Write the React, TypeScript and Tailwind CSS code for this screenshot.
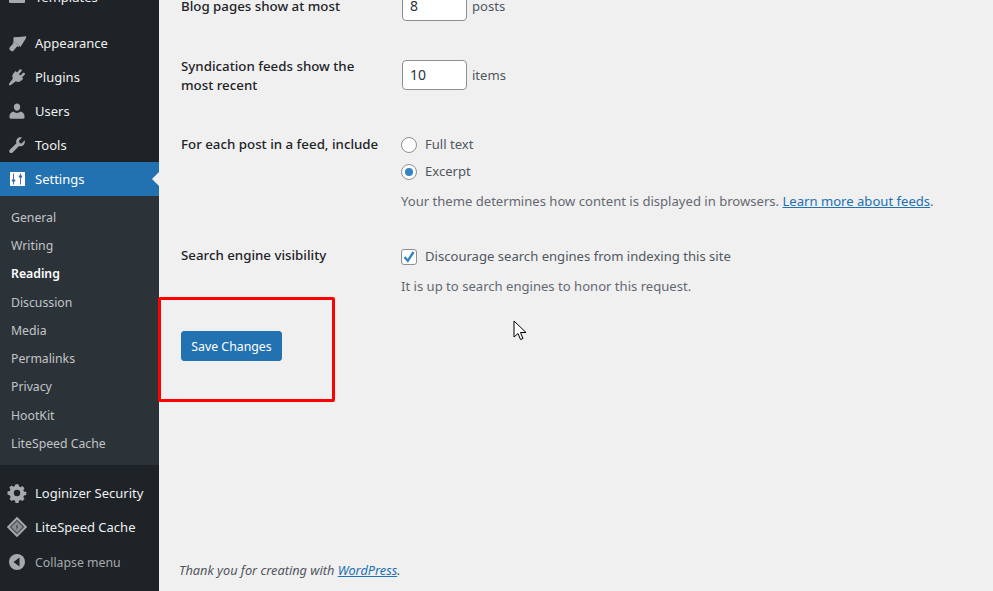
import React from "react";

function Brush() {
  return (
    <svg viewBox="0 0 20 20" className="w-5 h-5" fill="#a7aaad">
      <path d="M6.500 4.200 12 4l7.300-.8-.5 2.300-5.300 8.400L6.500 8z" />
      <path d="M7 8.200 12.300 13l-.9 1.200-1.200-1-3.700 4.600c-.7.700-1.700.7-2.400.1l-1.300-1.100c-.6-.6-.7-1.500-.1-2.200l3.900-4.700-1-1z" />
    </svg>
  );
}
function Plug() {
  return (
    <svg viewBox="0 0 20 20" className="w-5 h-5" fill="#a7aaad">
      <path d="M12.600 2.600c.5-.5 1.300-.5 1.800 0s.5 1.300 0 1.800l-2.500 2.600 1.500 1.500 2.400-2.500c.5-.5 1.300-.5 1.800 0s.5 1.300 0 1.800L15 10.400l1.300 1.200-1.300 1.400c-1.900 1.900-4.300 2.500-6.100 1.300L3.500 18.200H2v-1.500l3.900-5.300C4.700 9.600 5.300 7.300 7.200 5.400l1.400-1.300 1.400 1.300z" />
    </svg>
  );
}
function User() {
  return (
    <svg viewBox="0 0 20 20" className="w-5 h-5" fill="#a7aaad">
      <path d="M10 2.500c1.900 0 3.200 1.500 3.200 3.400S11.900 9.700 10 9.700 6.800 7.800 6.800 5.900 8.100 2.500 10 2.500zM2.500 15.200c0-2.300 1.600-4 3.800-4.600 1 .9 2.300 1.300 3.700 1.300s2.700-.4 3.700-1.300c2.200.6 3.800 2.300 3.800 4.600v1.300c0 .8-.6 1.200-1.300 1.200H3.800c-.7 0-1.300-.4-1.300-1.200z" />
    </svg>
  );
}
function Wrench() {
  return (
    <svg viewBox="0 0 20 20" className="w-5 h-5" fill="#a7aaad">
      <path d="M17.600 5.300c.6 1.600.3 3.400-1 4.600-1.200 1.200-3 1.500-4.500 1L5.600 17.500c-.8.800-2 .8-2.800 0s-.8-2 0-2.800L9.400 8.200c-.6-1.600-.2-3.400 1-4.600 1.200-1.300 3-1.600 4.600-1L12 5.700l.5 2.200 2.100.5z" />
    </svg>
  );
}
function Sliders() {
  return (
    <svg viewBox="0 0 20 20" className="w-5 h-5">
      <rect x="3" y="3" width="15" height="14" fill="#fff" />
      <path d="M6.500 4.500v11M13.500 4.500v11" stroke="#6a5fc0" strokeWidth="1" />
      <path d="M4.800 11.500h3.400M11.800 7.500h3.400" stroke="#2271b1" strokeWidth="2" />
    </svg>
  );
}
function Gear() {
  return (
    <svg viewBox="0 0 20 20" className="w-5 h-5" fill="#a7aaad">
      <path fillRule="evenodd" d="M8.500 1.800h3l.5 2.300c.5.200 1 .4 1.400.7l2-1.200 2.100 2.100-1.200 2c.3.400.5.900.7 1.400l2.300.5v3l-2.300.5c-.2.500-.4 1-.7 1.400l1.200 2-2.100 2.100-2-1.200c-.4.300-.9.500-1.400.7l-.5 2.300h-3l-.5-2.300c-.5-.2-1-.4-1.400-.7l-2 1.200-2.100-2.100 1.200-2c-.3-.4-.5-.9-.7-1.400L.5 12v-3l2.300-.5c.2-.5.400-1 .7-1.400l-1.200-2 2.100-2.100 2 1.200c.4-.3.900-.5 1.400-.7zM10 7.300a3.200 3.200 0 1 0 0 6.400 3.200 3.200 0 0 0 0-6.400z" transform="translate(0 -.5)" />
    </svg>
  );
}
function Diamond() {
  return (
    <svg viewBox="0 0 22 22" className="w-[22px] h-[22px]">
      <path d="M11 .8 21.200 11 11 21.200.8 11z" fill="#a7aaad" />
      <path d="M11 3.500 18.500 11 11 18.500 3.500 11z" fill="#50565b" />
      <path d="M11 5.500 16.500 11 11 16.500 5.500 11z" fill="#8c8f94" />
      <path d="M11.400 7.800 9.700 11.300h1.100l-.3 2.900 1.800-3.500h-1.100z" fill="#3c4146" />
    </svg>
  );
}
function CollapseIcon() {
  return (
    <svg viewBox="0 0 20 20" className="w-5 h-5">
      <circle cx="10" cy="10" r="8" fill="#a7aaad" />
      <path d="M12.500 5.500v9L6.500 10z" fill="#1d2327" />
    </svg>
  );
}

function Item({ icon, label }: { icon: React.ReactNode; label: string }) {
  return (
    <div className="h-[34px] flex items-center text-[#f0f0f1] text-[13px]">
      <span className="w-[35px] pl-[7px] flex items-center shrink-0">{icon}</span>
      <span className="pt-[2px]">{label}</span>
    </div>
  );
}

const subs = ["General", "Writing", "Reading", "Discussion", "Media", "Permalinks", "Privacy", "HootKit", "LiteSpeed Cache"];

export default function App() {
  return (
    <div className="relative w-[993px] h-[591px] overflow-hidden flex bg-[#f0f0f1] font-['Noto_Sans','Open_Sans',sans-serif]">
      <aside className="w-[159px] h-[591px] shrink-0 bg-[#1d2327] flex flex-col overflow-hidden">
        <div className="-mt-[20px] mb-[12px]">
          <Item
            label="Templates"
            icon={
              <svg viewBox="0 0 20 20" className="w-5 h-5" fill="#a7aaad">
                <rect x="2" y="4" width="16" height="12" rx="1" />
              </svg>
            }
          />
        </div>
        <Item icon={<Brush />} label="Appearance" />
        <Item icon={<Plug />} label="Plugins" />
        <Item icon={<User />} label="Users" />
        <Item icon={<Wrench />} label="Tools" />
        <div className="relative h-[34px] flex items-center bg-[#2271b1] text-white text-[13px]">
          <span className="w-[35px] pl-[7px] flex items-center shrink-0"><Sliders /></span>
          <span className="pt-[2px]">Settings</span>
          <span className="absolute right-0 top-[10px] border-y-[7px] border-r-[7px] border-y-transparent border-r-[#f0f0f1]" />
        </div>
        <div className="bg-[#2c3338] h-[269px] pt-[8px] flex flex-col">
          {subs.map((s) => (
            <div
              key={s}
              className={`h-[28.25px] pl-[11px] flex items-center text-[12.250px] ${s === "Reading" ? "font-semibold text-white" : "text-[#c3c4c7]"}`}
            >
              {s}
            </div>
          ))}
        </div>
        <div className="h-[11px]" />
        <Item icon={<Gear />} label="Loginizer Security" />
        <div className="h-[34px] flex items-center text-[#f0f0f1] text-[13px]">
          <span className="w-[35px] pl-[6px] flex items-center shrink-0"><Diamond /></span>
          <span className="pt-[2px]">LiteSpeed Cache</span>
        </div>
        <div className="h-[36px] flex items-center text-[#a7aaad] text-[12.300px]">
          <span className="w-[35px] pl-[7px] flex items-center shrink-0"><CollapseIcon /></span>
          <span className="pt-[2px]">Collapse menu</span>
        </div>
      </aside>

      <main className="flex-1 min-w-0 flex flex-col pl-[22px] text-[13.080px] text-[#50575e]">
        <section className="h-[21px] -mt-[7px] flex">
          <div className="w-[221px] text-[13.300px] text-[#1d2327] font-medium leading-[26px]">Blog pages show at most</div>
          <div className="flex items-start gap-[5px]">
            <div className="w-[65px] h-[28px] border border-[#8c8f94] rounded-[4px] bg-white pl-[7px] text-[#2c3338] text-[14px] leading-[24px]">8</div>
            <span className="leading-[26px]">posts</span>
          </div>
        </section>

        <section className="flex mt-[36px] h-[47px] items-start">
          <div className="w-[221px] text-[13.300px] text-[#1d2327] font-medium leading-[19px] pt-[7px] pr-[30px]">Syndication feeds show the most recent</div>
          <div className="flex items-center gap-[5px] pt-[10px]">
            <div className="w-[65px] h-[30px] border border-[#8c8f94] rounded-[4px] bg-white pl-[7px] text-[#2c3338] text-[14px] leading-[28px]">10</div>
            <span className="pt-[2px]">items</span>
          </div>
        </section>

        <section className="flex mt-[38px]">
          <div className="w-[221px] text-[13.300px] text-[#1d2327] font-medium leading-[19px]">For each post in a feed, include</div>
          <div className="flex flex-col">
            <label className="flex items-center gap-[8px] h-[19px] -ml-[1px]">
              <span className="w-4 h-4 rounded-full border border-[#8c8f94] bg-white" />
              <span>Full text</span>
            </label>
            <label className="flex items-center gap-[8px] h-[19px] mt-[8px] -ml-[1px]">
              <span className="w-4 h-4 rounded-full border border-[#8c8f94] bg-white flex items-center justify-center">
                <span className="w-2 h-2 rounded-full bg-[#3582c4]" />
              </span>
              <span>Excerpt</span>
            </label>
            <p className="mt-[11px] leading-[19px] -ml-[1px] text-[#646970] whitespace-nowrap">
              Your theme determines how content is displayed in browsers.{" "}
              <a className="text-[#2271b1] underline">Learn more about feeds</a>.
            </p>
          </div>
        </section>

        <section className="flex mt-[36px]">
          <div className="w-[221px] -mt-[1px] text-[13.300px] text-[#1d2327] font-medium leading-[19px]">Search engine visibility</div>
          <div className="flex flex-col">
            <label className="flex items-center gap-[8px] h-[19px] -ml-[1px]">
              <span className="w-4 h-4 rounded-[3px] border border-[#8c8f94] bg-white flex items-center justify-center">
                <svg viewBox="0 0 16 16" className="w-[16px] h-[16px] shrink-0">
                  <path d="M3.500 8 6.800 11.800 12.500 3" fill="none" stroke="#3582c4" strokeWidth="2.400" />
                </svg>
              </span>
              <span>Discourage search engines from indexing this site</span>
            </label>
            <p className="mt-[11px] leading-[19px] -ml-[1px] text-[#646970]">It is up to search engines to honor this request.</p>
          </div>
        </section>

        <div className="mt-[35px]">
          <button className="h-[30px] w-[101px] rounded-[3px] bg-[#2271b1] text-white text-[12.300px] border border-[#2271b1] p-0 pt-[2px]">Save Changes</button>
        </div>

        <p className="mt-auto mb-[11px] -ml-[2px] italic text-[12.750px] text-[#50575e] leading-[19px]">
          Thank you for creating with <a className="text-[#2271b1] underline">WordPress</a>.
        </p>
      </main>

      <div className="absolute left-[158px] top-[297px] w-[177px] h-[105px] border-[3px] border-[#ff0000] rounded-[2px]" />
      <svg className="absolute left-[513px] top-[320px]" width="14" height="22" viewBox="0 0 14 22">
        <path d="M1 1v16l4-3.500 2.500 6 2.500-1-2.500-6h5.500z" fill="#fff" stroke="#000" strokeWidth="1" />
      </svg>
    </div>
  );
}
